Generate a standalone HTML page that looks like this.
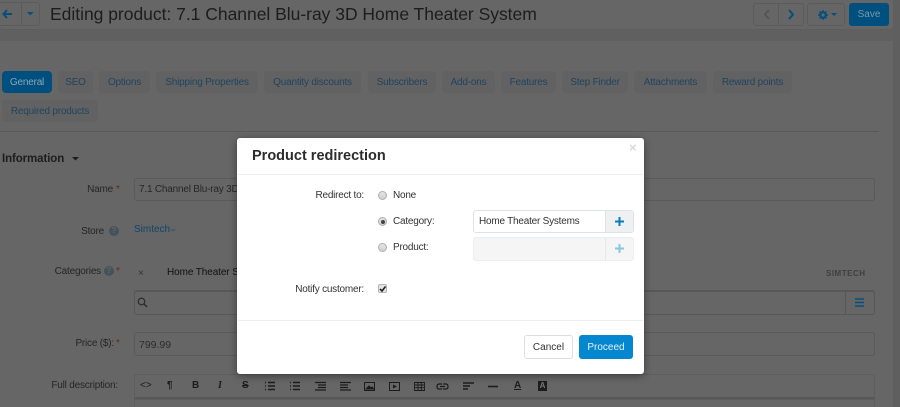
<!DOCTYPE html>
<html><head><meta charset="utf-8"><style>
html,body{margin:0;padding:0;width:900px;height:407px;overflow:hidden;background:#606060}
body{position:relative;font-family:"Liberation Sans",sans-serif;font-size:11px;color:#2c2c2c}
.a{position:absolute;white-space:nowrap}
.box{position:absolute;box-sizing:border-box}
.tab{position:absolute;top:71px;height:22px;line-height:24px;background:#626262;border-radius:4px;color:#1f4460;text-align:center;font-size:10px;letter-spacing:-.2px}
.lab{position:absolute;white-space:nowrap;text-align:right;color:#252525;font-size:10px;letter-spacing:-.2px}
.inp{position:absolute;box-sizing:border-box;background:#666;border:1px solid #5a5a5a;border-radius:3px}
.m{position:absolute;white-space:nowrap;color:#333;font-size:10px;letter-spacing:-.22px}
.ic{position:absolute;color:#1c1c1c;font-size:10px;white-space:nowrap}
.r{position:absolute;width:7px;height:7px;border-radius:50%;border:1px solid #b0b0b0;background:linear-gradient(#e4e4e4,#cfcfcf)}
</style></head><body>
<!-- page panels -->
<div class="box" style="left:0;top:0;width:893px;height:30px;background:#666;border-radius:0 0 3px 3px;border-bottom:1px solid #5e5e5e"></div>
<div class="box" style="left:0;top:41px;width:893px;height:366px;background:#666"></div>

<!-- header -->
<div class="box" style="left:-6px;top:2px;width:46px;height:24px;border:1px solid #5c5c5c;border-radius:3px"></div>
<div class="box" style="left:21px;top:3px;width:1px;height:22px;background:#5a5a5a"></div>
<svg class="a" style="left:2px;top:9px" width="11" height="10" viewBox="0 0 11 10"><path d="M5 1L1.5 5L5 9M2 5H10" fill="none" stroke="#064e7c" stroke-width="2"/></svg>
<svg class="a" style="left:27px;top:12px" width="7" height="4"><path d="M0 0H6.5L3.2 3.5Z" fill="#064e7c"/></svg>
<div class="a" style="left:50px;top:2px;font-size:17.5px;line-height:24px;color:#1d1d1d;letter-spacing:-.02px">Editing product: 7.1 Channel Blu-ray 3D Home Theater System</div>

<div class="box" style="left:753px;top:3px;width:51px;height:23px;border:1px solid #5c5c5c;border-radius:3px"></div>
<div class="box" style="left:778px;top:4px;width:1px;height:21px;background:#5a5a5a"></div>
<svg class="a" style="left:763px;top:9px" width="8" height="11"><path d="M6 1L2 5.5L6 10" fill="none" stroke="#555" stroke-width="2"/></svg>
<svg class="a" style="left:787px;top:9px" width="8" height="11"><path d="M2 1L6 5.5L2 10" fill="none" stroke="#064e7c" stroke-width="2"/></svg>
<div class="box" style="left:807px;top:3px;width:38px;height:23px;border:1px solid #5c5c5c;border-radius:3px"></div>
<svg class="a" style="left:818px;top:10px" width="10" height="10" viewBox="0 0 10 10"><circle cx="5" cy="5" r="2.8" fill="none" stroke="#064e7c" stroke-width="2"/><path d="M5 0V10M0 5H10M1.5 1.5L8.5 8.5M8.5 1.5L1.5 8.5" stroke="#064e7c" stroke-width="1.5"/><circle cx="5" cy="5" r="1.6" fill="#666"/></svg>
<svg class="a" style="left:831px;top:13px" width="6" height="4"><path d="M0 0H6L3 3Z" fill="#064e7c"/></svg>
<div class="box" style="left:849px;top:3px;width:40px;height:23px;background:#00507f;border-radius:3px;color:#7a99ac;font-size:10px;line-height:24px;text-align:center">Save</div>

<!-- tabs -->
<div class="tab" style="left:2px;width:50px;background:#00507f;color:#8aa7b8">General</div>
<div class="tab" style="left:58px;width:35px">SEO</div>
<div class="tab" style="left:99px;width:51px">Options</div>
<div class="tab" style="left:156px;width:102px">Shipping Properties</div>
<div class="tab" style="left:264px;width:97px">Quantity discounts</div>
<div class="tab" style="left:368px;width:68px">Subscribers</div>
<div class="tab" style="left:442px;width:53px">Add-ons</div>
<div class="tab" style="left:501px;width:55px">Features</div>
<div class="tab" style="left:562px;width:66px">Step Finder</div>
<div class="tab" style="left:634px;width:73px">Attachments</div>
<div class="tab" style="left:713px;width:79px">Reward points</div>
<div class="tab" style="left:2px;top:100px;width:96px">Required products</div>
<div class="box" style="left:0;top:131px;width:879px;height:1px;background:#5a5a5a"></div>

<!-- form -->
<div class="a" style="left:2px;top:151px;font-size:11.5px;line-height:16px;font-weight:bold;color:#1d1d1d;letter-spacing:-.1px">Information</div>
<svg class="a" style="left:72px;top:157px" width="7" height="4"><path d="M0 0H7L3.5 3.5Z" fill="#1d1d1d"/></svg>

<div class="lab" style="right:787px;top:184px">Name</div><div class="a" style="left:116px;top:184px;color:#6d2424;font-size:10px">*</div>
<div class="inp" style="left:134px;top:178px;width:741px;height:23px"></div>
<div class="a" style="left:139px;top:184px;font-size:10px;letter-spacing:-.2px;color:#262626">7.1 Channel Blu-ray 3D</div>

<div class="lab" style="right:796px;top:226px">Store</div>
<div class="a" style="left:109px;top:226px;width:10px;height:10px;border-radius:50%;background:#45525c;color:#666;font:bold 8px/10px 'Liberation Sans',sans-serif;text-align:center">?</div>
<div class="a" style="left:134px;top:224px;font-size:10px;color:#10456a">Simtech</div>
<svg class="a" style="left:170px;top:229px" width="6" height="4"><path d="M0 0H6L3 3Z" fill="#4a5a66"/></svg>

<div class="lab" style="right:799px;top:266px">Categories</div>
<div class="a" style="left:104px;top:266px;width:10px;height:10px;border-radius:50%;background:#45525c;color:#666;font:bold 8px/10px 'Liberation Sans',sans-serif;text-align:center">?</div>
<div class="a" style="left:116px;top:266px;color:#6d2424;font-size:10px">*</div>
<div class="a" style="left:138px;top:268px;font-size:10px;color:#333">×</div>
<div class="a" style="left:167px;top:267px;font-size:10px;letter-spacing:-.1px;color:#111">Home Theater Sy</div>
<div class="a" style="left:826px;top:269px;font-size:8px;letter-spacing:.5px;font-weight:bold;color:#3f3f3f">SIMTECH</div>
<div class="inp" style="left:134px;top:290px;width:741px;height:25px;border-color:#585858;border-top-width:2px"></div>
<div class="box" style="left:845px;top:291px;width:1px;height:23px;background:#575757"></div>
<svg class="a" style="left:855px;top:298px" width="10" height="9"><path d="M0 1H9M0 4.5H9M0 8H9" stroke="#064e7c" stroke-width="1.6"/></svg>
<svg class="a" style="left:137px;top:297px" width="11" height="11"><circle cx="4.5" cy="4.5" r="3.3" fill="none" stroke="#2c2c2c" stroke-width="1.2"/><path d="M7 7L10 10" stroke="#2c2c2c" stroke-width="1.5"/></svg>

<div class="lab" style="right:786px;top:338px">Price ($):</div><div class="a" style="left:116px;top:338px;color:#6d2424;font-size:10px">*</div>
<div class="inp" style="left:134px;top:332px;width:741px;height:24px"></div>
<div class="a" style="left:139px;top:339px;font-size:10.5px;color:#2c2c2c">799.99</div>

<div class="lab" style="right:782px;top:380px">Full description:</div>
<div class="box" style="left:134px;top:374px;width:741px;height:25px;border:1px solid #5e5e5e;border-bottom:2px solid #585858;border-radius:2px 2px 0 0"></div>
<div class="box" style="left:134px;top:399px;width:741px;height:8px;border:1px solid #5e5e5e;border-bottom:0"></div>
<div class="ic" style="left:140px;top:380px">&lt;&gt;</div>
<div class="ic" style="left:167px;top:380px;font-weight:bold">¶</div>
<div class="ic" style="left:192px;top:380px;font-weight:bold">B</div>
<div class="ic" style="left:218px;top:380px;font-style:italic;font-weight:bold;font-family:'Liberation Serif',serif">I</div>
<div class="ic" style="left:242px;top:380px;font-weight:bold"><s>S</s></div>
<svg class="a" style="left:264px;top:381px" width="360" height="11" viewBox="0 0 360 11" fill="none" stroke="#1c1c1c">
<path d="M1 1.5H2M1 5H2M1 8.500H2M4 1.500H11M4 5H11M4 8.500H11" stroke-width="1.500"/>
<path d="M26 1.500H27M26 5H27M26 8.500H27M29 1.500H36M29 5H36M29 8.500H36" stroke-width="1.500"/>
<path d="M51 1.500H62M54 4H62M54 6.500H62M51 9H62" stroke-width="1.300"/>
<path d="M76 1.500H87M76 4H84M76 6.500H84M76 9H87" stroke-width="1.300"/>
<rect x="100.500" y="1.500" width="10" height="8"/><path d="M102 8L105 5L107 7L108 6L110 8Z" fill="#1c1c1c"/>
<rect x="125.500" y="1.500" width="10" height="8"/><path d="M129 3.500L133 5.500L129 7.500Z" fill="#1c1c1c" stroke="none"/>
<path d="M150.500 1.500H160.500V9.500H150.500ZM150.500 4H160.500M150.500 6.700H160.500M154 1.500V9.500M157.300 1.500V9.500" stroke-width=".9"/>
<path d="M178 3H175Q173 3 173 5.500T175 8H178M179 3H182Q184 3 184 5.500T182 8H179M176 5.500H181" stroke-width="1.200"/>
<path d="M199 2H210M199 5H206M199 8H204" stroke-width="1.500"/>
<path d="M224 5.500H234" stroke-width="1.600"/>
</svg>
<div class="ic" style="left:514px;top:380px;font-weight:bold;text-decoration:underline">A</div>
<div class="box" style="left:538px;top:381px;width:9px;height:10px;background:#1c1c1c;color:#777;font:bold 8px/10px 'Liberation Sans',sans-serif;text-align:center">A</div>
<div class="box" style="left:893px;top:0;width:7px;height:407px;background:#5f5f5f"></div>

<!-- modal -->
<div class="box" style="left:237px;top:138px;width:407px;height:236px;background:#fff;border-radius:3px;box-shadow:0 2px 8px rgba(0,0,0,.4)"></div>
<div class="a" style="left:252px;top:147px;font-size:14.5px;line-height:18px;font-weight:bold;color:#2c2c2c">Product redirection</div>
<div class="a" style="left:629px;top:141px;font-size:13px;line-height:14px;font-weight:bold;color:#d9d9d9">×</div>
<div class="box" style="left:238px;top:174px;width:405px;height:1px;background:#eee"></div>

<div class="m" style="right:536px;top:190px">Redirect to:</div>
<div class="r" style="left:378px;top:191px"></div>
<div class="m" style="left:393px;top:190px">None</div>
<div class="r" style="left:378px;top:217px"></div>
<div class="a" style="left:380.500px;top:219.500px;width:4px;height:4px;border-radius:50%;background:#444"></div>
<div class="m" style="left:393px;top:216px">Category:</div>
<div class="box" style="left:473px;top:210px;width:161px;height:23px;border:1px solid #dfe3e6;border-radius:3px;background:#fff"></div>
<div class="box" style="left:605px;top:211px;width:28px;height:21px;background:#eef0f2;border-left:1px solid #dfe3e6;border-radius:0 2px 2px 0"></div>
<div class="m" style="left:479px;top:216px">Home Theater Systems</div>
<svg class="a" style="left:615px;top:217px" width="9" height="9"><path d="M4.500 0V9M0 4.500H9" stroke="#0a7dbd" stroke-width="2"/></svg>
<div class="r" style="left:378px;top:243px"></div>
<div class="m" style="left:393px;top:242px">Product:</div>
<div class="box" style="left:473px;top:237px;width:161px;height:24px;border:1px solid #eceeef;border-radius:3px;background:#f5f5f5"></div>
<div class="box" style="left:605px;top:238px;width:1px;height:22px;background:#e8e8e8"></div>
<svg class="a" style="left:615px;top:244px" width="9" height="9"><path d="M4.500 0V9M0 4.500H9" stroke="#8cc4e4" stroke-width="2"/></svg>

<div class="m" style="right:536px;top:284px">Notify customer:</div>
<div class="box" style="left:378px;top:284px;width:9px;height:9px;background:#e4e4e4;border:1px solid #b5b5b5;border-radius:2px"></div>
<svg class="a" style="left:379px;top:285px" width="8" height="8"><path d="M1 4L3 6L6.500 1.500" fill="none" stroke="#222" stroke-width="1.600"/></svg>
<div class="box" style="left:238px;top:320px;width:405px;height:1px;background:#eee"></div>
<div class="box" style="left:524px;top:335px;width:49px;height:24px;border:1px solid #dcdfe2;border-radius:3px;background:#fff;color:#333;font-size:10px;line-height:23px;text-align:center">Cancel</div>
<div class="box" style="left:579px;top:335px;width:54px;height:24px;border-radius:3px;background:#0487cf;color:#e4f2fa;font-size:10px;line-height:26px;text-align:center">Proceed</div>
</body></html>
